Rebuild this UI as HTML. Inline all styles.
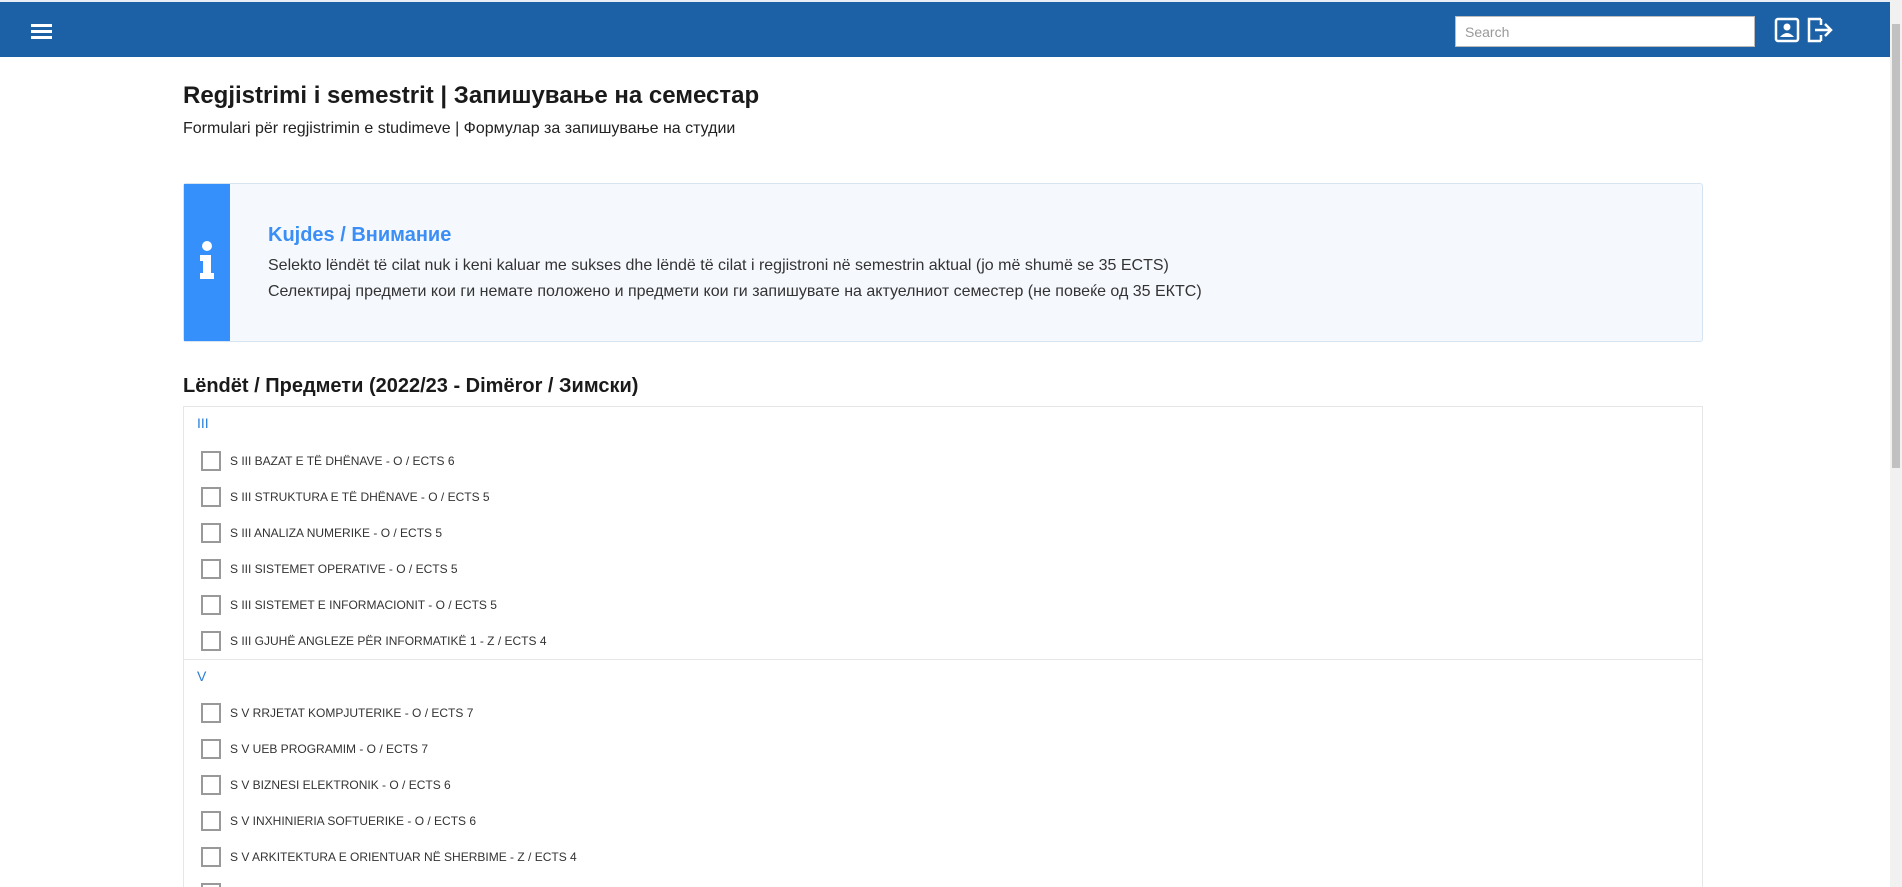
<!DOCTYPE html>
<html><head><meta charset="utf-8">
<style>
*{box-sizing:border-box;margin:0;padding:0}
html,body{width:1902px;height:887px;overflow:hidden;background:#fff;font-family:"Liberation Sans",Arial,sans-serif;color:#222}
.top{position:absolute;left:0;top:0;width:1890px;height:2px;background:#e8eef5}
.nav{position:absolute;left:0;top:2px;width:1890px;height:55px;background:#1c60a5}
.ham{position:absolute;left:31px;top:22px;width:21px;height:17px}
.ham i{display:block;height:3px;background:#fff;margin-bottom:3px}
.search{position:absolute;left:1455px;top:14px;width:300px;height:31px;background:#fff;border:1px solid #bbb;font-size:14px;color:#999;padding:7px 9px}
.sb{position:absolute;right:0;top:0;width:12px;height:887px;background:#f1f1f1}
.sb div{position:absolute;left:2px;top:24px;width:8px;height:444px;background:#c1c1c1}
h1{position:absolute;left:183px;top:82px;font-size:24px;font-weight:bold;color:#1a1a1a}
.sub{position:absolute;left:183px;top:120px;font-size:16px;color:#222}
.info{position:absolute;left:183px;top:183px;width:1520px;height:159px;background:#f5f8fd;border:1px solid #d6e3f1;border-radius:3px}
.strip{position:absolute;left:0;top:0;width:46px;height:157px;background:#3590fb}
.info h3{position:absolute;left:84px;top:40px;font-size:20px;color:#3b8ef5;font-weight:bold}
.info p{position:absolute;left:84px;font-size:16px;color:#333;white-space:nowrap}
h2{position:absolute;left:183px;top:375px;font-size:20px;font-weight:bold;color:#1a1a1a}
.list{position:absolute;left:183px;top:406px;width:1520px;height:481px;border:1px solid #e6e6e6;border-bottom:none;overflow:hidden}
.lab{position:absolute;left:13px;font-size:14px;color:#2a7fd8}
.sep{position:absolute;left:0;width:1518px;height:1px;background:#e6e6e6}
.it{position:absolute;left:17px;height:20px;font-size:12px;color:#333;white-space:nowrap}
.it span{position:absolute;left:0;top:0;width:20px;height:20px;border:2px solid #999}
.it b{font-weight:normal;position:absolute;left:29px;top:3px}
</style></head><body>
<div class="top"></div>
<div class="nav">
<div class="ham"><i></i><i></i><i></i></div>
<div class="search">Search</div>
<svg style="position:absolute;left:1774px;top:15px" width="26" height="26" viewBox="0 0 26 26"><rect x="2" y="2" width="22" height="22" rx="2" fill="none" stroke="#fff" stroke-width="2.5"/><circle cx="13" cy="10" r="3.5" fill="#fff"/><path d="M6 20 Q13 12 20 20Z" fill="#fff"/></svg>
<svg style="position:absolute;left:1806px;top:15px" width="28" height="26" viewBox="0 0 28 26"><path d="M15 2H3v22h12M15 8V2M15 24v-6" fill="none" stroke="#fff" stroke-width="2.5"/><path d="M9 13h16M19 7l6 6-6 6" fill="none" stroke="#fff" stroke-width="2.5"/></svg>
</div>
<div class="sb"><div></div></div>
<h1>Regjistrimi i semestrit | Запишување на семестар</h1>
<div class="sub">Formulari për regjistrimin e studimeve | Формулар за запишување на студии</div>
<div class="info">
<div class="strip"><svg style="position:absolute;left:14px;top:56px" width="18" height="42" viewBox="0 0 18 42"><circle cx="9" cy="6" r="5" fill="#fff"/><path d="M2 15h11v18h3v6H2v-6h3V21H2z" fill="#fff"/></svg></div>
<h3>Kujdes / Внимание</h3>
<p style="top:73px">Selekto lëndët të cilat nuk i keni kaluar me sukses dhe lëndë të cilat i regjistroni në semestrin aktual (jo më shumë se 35 ECTS)</p>
<p style="top:99px">Селектирај предмети кои ги немате положено и предмети кои ги запишувате на актуелниот семестер (не повеќе од 35 ЕКТС)</p>
</div>
<h2>Lëndët / Предмети (2022/23 - Dimëror / Зимски)</h2>
<div class="list">
<div class="lab" style="top:8px">III</div>
<div class="it" style="top:44px"><span></span><b>S III BAZAT E TË DHËNAVE - O / ECTS 6</b></div>
<div class="it" style="top:80px"><span></span><b>S III STRUKTURA E TË DHËNAVE - O / ECTS 5</b></div>
<div class="it" style="top:116px"><span></span><b>S III ANALIZA NUMERIKE - O / ECTS 5</b></div>
<div class="it" style="top:152px"><span></span><b>S III SISTEMET OPERATIVE - O / ECTS 5</b></div>
<div class="it" style="top:188px"><span></span><b>S III SISTEMET E INFORMACIONIT - O / ECTS 5</b></div>
<div class="it" style="top:224px"><span></span><b>S III GJUHË ANGLEZE PËR INFORMATIKË 1 - Z / ECTS 4</b></div>
<div class="sep" style="top:252px"></div>
<div class="lab" style="top:261px">V</div>
<div class="it" style="top:296px"><span></span><b>S V RRJETAT KOMPJUTERIKE - O / ECTS 7</b></div>
<div class="it" style="top:332px"><span></span><b>S V UEB PROGRAMIM - O / ECTS 7</b></div>
<div class="it" style="top:368px"><span></span><b>S V BIZNESI ELEKTRONIK - O / ECTS 6</b></div>
<div class="it" style="top:404px"><span></span><b>S V INXHINIERIA SOFTUERIKE - O / ECTS 6</b></div>
<div class="it" style="top:440px"><span></span><b>S V ARKITEKTURA E ORIENTUAR NË SHERBIME - Z / ECTS 4</b></div>
<div class="it" style="top:476px"><span></span><b></b></div>
</div>
</body></html>
